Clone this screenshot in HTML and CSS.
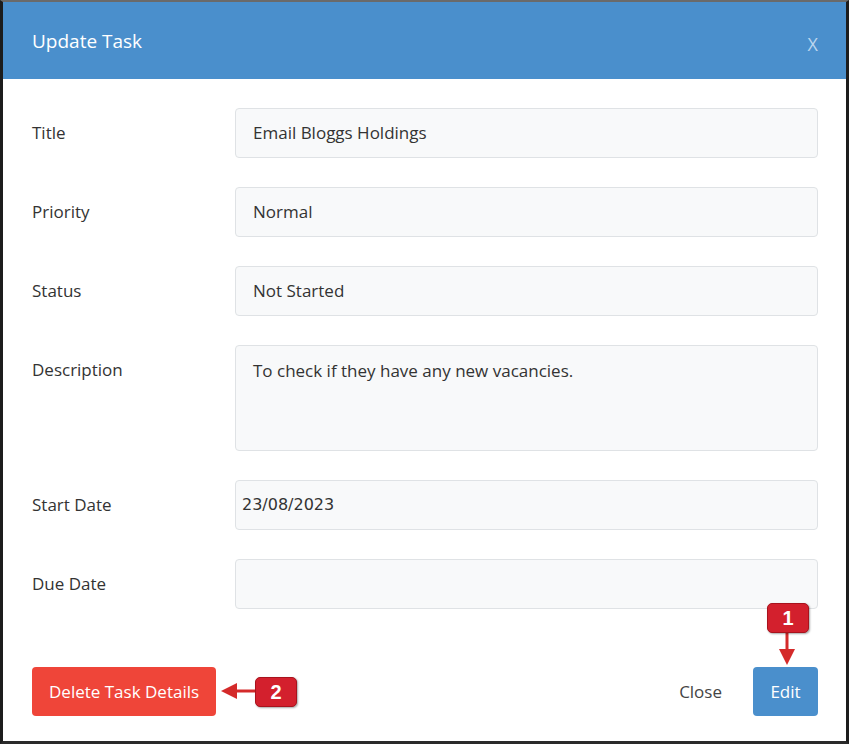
FILE: index.html
```html
<!DOCTYPE html>
<html lang="en">
<head>
    <meta charset="UTF-8">
    <meta name="viewport" content="width=device-width, initial-scale=1.0">
    <title>Update Task</title>
    <link rel="stylesheet" href="styles.css">
</head>
<body>
    <div class="modal">
        <div class="modal-header">
            <h1>Update Task</h1>
            <span class="close-x">X</span>
        </div>
        <form class="modal-body">
            <div class="form-row">
                <label>Title</label>
                <div class="field">Email Bloggs Holdings</div>
            </div>
            <div class="form-row">
                <label>Priority</label>
                <div class="field">Normal</div>
            </div>
            <div class="form-row">
                <label>Status</label>
                <div class="field">Not Started</div>
            </div>
            <div class="form-row">
                <label>Description</label>
                <div class="field field-area">To check if they have any new vacancies.</div>
            </div>
            <div class="form-row">
                <label>Start Date</label>
                <div class="field field-date">23/08/2023</div>
            </div>
            <div class="form-row">
                <label>Due Date</label>
                <div class="field field-date"></div>
            </div>
        </form>
        <div class="modal-footer">
            <button class="btn btn-danger">Delete Task Details</button>
            <div class="footer-right">
                <button class="btn btn-link">Close</button>
                <button class="btn btn-primary">Edit</button>
            </div>
        </div>

        <!-- annotation callouts -->
        <svg class="arrows" width="849" height="744" viewBox="0 0 849 744">
            <line x1="787" y1="630" x2="787" y2="652" stroke="#d42a2a" stroke-width="3"/>
            <polygon points="779,649 795,649 787,665" fill="#d42a2a"/>
            <line x1="258" y1="691" x2="234" y2="691" stroke="#d42a2a" stroke-width="3"/>
            <polygon points="237,683 237,699 221,691" fill="#d42a2a"/>
        </svg>
        <div class="badge badge-1">1</div>
        <div class="badge badge-2">2</div>
    </div>
</body>
</html>
```

FILE: styles.css
```css
body {
    margin: 0;
    padding: 0;
    background: #fff;
    font-family: 'Open Sans', 'Segoe UI', sans-serif;
    color: #333;
}
.modal {
    position: relative;
    width: 849px;
    height: 744px;
    box-sizing: border-box;
    border: 3px solid #1c1c1c;
    border-top: 2px solid #6a6a6a;
    border-bottom: 3px solid #2a2a2a;
    background: #fff;
}
.modal-header {
    height: 77px;
    background: #4a8fcc;
    display: flex;
    align-items: center;
    justify-content: space-between;
    padding: 0 28px 0 29px;
}
.modal-header h1 {
    margin: 0;
    font-size: 19px;
    font-weight: 400;
    color: #fff;
    margin-top: 0;
}
.close-x {
    color: #bcd6ef;
    font-size: 18px;
    margin-top: 6px;
}
.modal-body {
    padding: 29px 28px 0 29px;
    display: flex;
    flex-direction: column;
    gap: 29px;
}
.form-row {
    display: grid;
    grid-template-columns: 203px 1fr;
    align-items: start;
}
label {
    font-size: 17px;
    line-height: 50px;
    color: #333;
}
.field {
    height: 50px;
    box-sizing: border-box;
    background: #f8f9fa;
    border: 1px solid #dfe2e5;
    border-radius: 4px;
    padding: 0 17px;
    font-size: 17px;
    line-height: 48px;
    color: #333;
}
.field-area {
    height: 106px;
    line-height: 26px;
    padding-top: 12px;
}
.field-date {
    padding: 0 6px;
    font-family: 'DejaVu Sans', sans-serif;
    font-size: 16px;
}
.modal-footer {
    display: flex;
    justify-content: space-between;
    align-items: center;
    padding: 58px 28px 0 29px;
}
.footer-right {
    display: flex;
    align-items: center;
    gap: 31px;
}
.btn {
    height: 49px;
    border: none;
    border-radius: 4px;
    font-family: 'Open Sans', 'Segoe UI', sans-serif;
    font-size: 17px;
    cursor: pointer;
    padding: 0 17px;
}
.btn-danger {
    background: #ef4539;
    color: #fff;
}
.btn-primary {
    background: #4a8fcc;
    color: #fff;
    width: 65px;
}
.btn-link {
    background: none;
    color: #444;
    padding: 0;
}
.arrows {
    position: absolute;
    left: -3px;
    top: -2px;
    pointer-events: none;
}
.badge {
    position: absolute;
    width: 42px;
    height: 30px;
    box-sizing: border-box;
    background: #d3202d;
    border: 1px solid #a8131d;
    border-radius: 5px;
    color: #fff;
    font-family: 'Liberation Sans', Arial, sans-serif;
    font-weight: bold;
    font-size: 20px;
    line-height: 28px;
    text-align: center;
    box-shadow: 1px 1px 2px rgba(0, 0, 0, 0.35);
}
.badge-1 {
    left: 764px;
    top: 601px;
}
.badge-2 {
    left: 252px;
    top: 675px;
}
```
